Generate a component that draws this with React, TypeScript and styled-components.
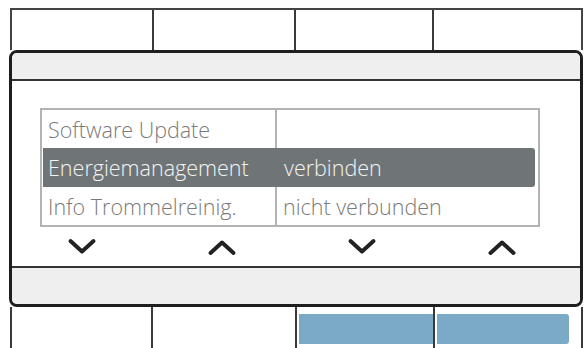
import React from 'react';
import styled, {createGlobalStyle} from 'styled-components';

const GlobalStyle = createGlobalStyle`
  html, body {
    margin: 0;
    padding: 0;
    background: #fff;
  }
  body {
    font-family: 'Open Sans', 'DejaVu Sans', sans-serif;
  }
`

interface RowType {
    label: string
    value: string
    active?: boolean
}

const rows: RowType[] = [
    {label: 'Software Update', value: ''},
    {label: 'Energiemanagement', value: 'verbinden', active: true},
    {label: 'Info Trommelreinig.', value: 'nicht verbunden'},
]

const Chevron: React.FC<{up?: boolean}> = ({up}) => (
    <svg width="30" height="18" viewBox="0 0 30 18">
        <path
            d={up ? 'M3.5 15 L15 4.5 L26.5 15' : 'M3.5 3 L15 13.5 L26.5 3'}
            fill="none"
            stroke="#222"
            strokeWidth="4"
            strokeLinecap="round"
            strokeLinejoin="round"
        />
    </svg>
)

const App = () => {
    return (
        <Screen>
            <GlobalStyle/>
            <TopBar>
                <BarCell/>
                <BarCell/>
                <BarCell/>
                <BarCell/>
            </TopBar>
            <Panel>
                <PanelBand/>
                <PanelBody>
                    <Table>
                        {rows.map(({label, value, active}) => (
                            <Row key={label} $active={active}>
                                <LabelCell $active={active}>{label}</LabelCell>
                                <ValueCell $active={active}>{value}</ValueCell>
                            </Row>
                        ))}
                    </Table>
                    <Arrows>
                        <Chevron/>
                        <Chevron up/>
                        <Chevron/>
                        <Chevron up/>
                    </Arrows>
                </PanelBody>
                <PanelBand $bottom/>
            </Panel>
            <BottomBar>
                <BarCell/>
                <BarCell/>
                <BarCell><SoftKey/></BarCell>
                <BarCell><SoftKey $last/></BarCell>
            </BottomBar>
        </Screen>
    );
};

export default App;

const Screen = styled.div`
  width: 585px;
  height: 348px;
  overflow: hidden;
  padding-top: 8px;
  box-sizing: border-box;
`

const TopBar = styled.div`
  margin: 0 2px 0 10px;
  height: 42px;
  display: grid;
  grid-template-columns: 142px 142px 138px 1fr;
  border: 2px solid #444;
  border-bottom: none;
  box-sizing: border-box;
`

const BottomBar = styled.div`
  margin: 0 2px 0 10px;
  height: 42px;
  display: grid;
  grid-template-columns: 141px 144px 138px 1fr;
  border: 2px solid #3a3a3a;
  border-top: none;
  border-bottom: none;
  box-sizing: border-box;
`

const BarCell = styled.div`
  border-right: 2px solid #3a3a3a;
  display: flex;
  padding: 7px 0 5px 2px;
  &:last-child {
    border-right: none;
    padding-right: 12px;
  }
`

const SoftKey = styled.div<{$last?: boolean}>`
  flex: 1;
  background: #7aaac6;
  border-radius: ${({$last}) => $last ? '0 3px 3px 0' : '0'};
`

const Panel = styled.div`
  margin: 0 2px 0 9px;
  height: 257px;
  border: 3px solid #1e1e1e;
  border-radius: 8px;
  overflow: hidden;
  display: flex;
  flex-direction: column;
  box-sizing: border-box;
`

const PanelBand = styled.div<{$bottom?: boolean}>`
  height: ${({$bottom}) => $bottom ? '36px' : '26px'};
  background: #efefef;
  border-top: ${({$bottom}) => $bottom ? '2px solid #333' : 'none'};
  border-bottom: ${({$bottom}) => $bottom ? 'none' : '2px solid #333'};
  flex-shrink: 0;
`

const PanelBody = styled.div`
  flex: 1;
  background: #fff;
  padding: 27px 0 0 28px;
`

const Table = styled.div`
  width: 500px;
  border: 2px solid #b3b3b3;
  box-sizing: border-box;
  display: flex;
  flex-direction: column;
`

const Row = styled.div<{$active?: boolean}>`
  display: grid;
  grid-template-columns: 235px 1fr;
  height: ${({$active}) => $active ? '39px' : '38px'};
  margin: ${({$active}) => $active ? '0 3px 0 1px' : '0'};
  background: ${({$active}) => $active ? '#6f7577' : 'transparent'};
  border-radius: ${({$active}) => $active ? '0 3px 3px 0' : '0'};
`

const LabelCell = styled.div<{$active?: boolean}>`
  display: flex;
  align-items: center;
  padding-left: ${({$active}) => $active ? '5px' : '6px'};
  font-size: 21.5px;
  font-weight: 300;
  color: ${({$active}) => $active ? '#f4f4f4' : '#7a7a7a'};
  border-right: 2px solid ${({$active}) => $active ? 'transparent' : '#b3b3b3'};
  white-space: nowrap;
`

const ValueCell = styled.div<{$active?: boolean}>`
  display: flex;
  align-items: center;
  padding-left: 6px;
  font-size: 21.5px;
  font-weight: 300;
  color: ${({$active}) => $active ? '#f4f4f4' : '#7a7a7a'};
  white-space: nowrap;
`

const Arrows = styled.div`
  margin: 11px 0 0 -28px;
  width: 560px;
  display: grid;
  grid-template-columns: repeat(4, 1fr);
  justify-items: center;
  svg {
    display: block;
  }
`
